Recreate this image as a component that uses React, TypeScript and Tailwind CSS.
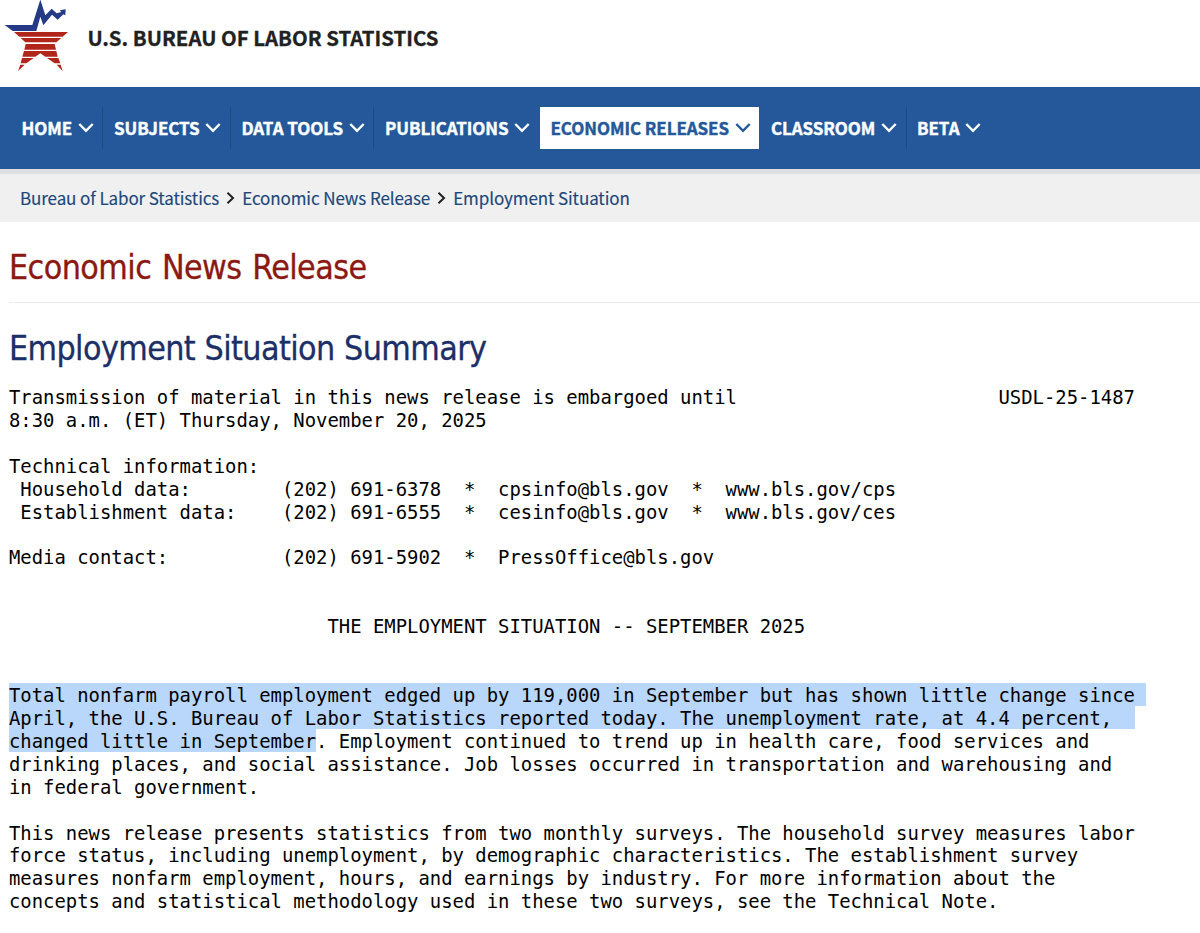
import React from "react";

type NavItem = { label: string; box: string; active?: boolean };

const navItems: NavItem[] = [
  { label: "HOME", box: "w-[91px] border-r pl-[9.5px]" },
  { label: "SUBJECTS", box: "w-[128px] border-r pl-[11px]" },
  { label: "DATA TOOLS", box: "w-[143px] border-r pl-[10.5px]" },
  { label: "PUBLICATIONS", box: "w-[166px] pl-[11px]" },
  { label: "ECONOMIC RELEASES", box: "w-[219px] pl-[10.5px]", active: true },
  { label: "CLASSROOM", box: "w-[148px] border-r pl-[12px]" },
  { label: "BETA", box: "w-[90px] pl-[10px]" },
];

const crumbs = ["Bureau of Labor Statistics", "Economic News Release", "Employment Situation"];

const intro = `Transmission of material in this news release is embargoed until                       USDL-25-1487
8:30 a.m. (ET) Thursday, November 20, 2025

Technical information:
 Household data:        (202) 691-6378  *  cpsinfo@bls.gov  *  www.bls.gov/cps
 Establishment data:    (202) 691-6555  *  cesinfo@bls.gov  *  www.bls.gov/ces

Media contact:          (202) 691-5902  *  PressOffice@bls.gov


                            THE EMPLOYMENT SITUATION -- SEPTEMBER 2025


`;

const selected = `Total nonfarm payroll employment edged up by 119,000 in September but has shown little change since 
April, the U.S. Bureau of Labor Statistics reported today. The unemployment rate, at 4.4 percent,  
changed little in September`;

const rest = `. Employment continued to trend up in health care, food services and
drinking places, and social assistance. Job losses occurred in transportation and warehousing and
in federal government.

This news release presents statistics from two monthly surveys. The household survey measures labor
force status, including unemployment, by demographic characteristics. The establishment survey
measures nonfarm employment, hours, and earnings by industry. For more information about the
concepts and statistical methodology used in these two surveys, see the Technical Note.`;

function StarLogo() {
  return (
    <svg viewBox="0 0 240 240" className="h-20 w-20 shrink-0" aria-hidden="true">
      <path
        d="M14 75 L97 75 L121 -1 L136 46 L155 26 L170 40 L184 36 L179 31 L197 28 L196 46 L190 43 L173 59 L156 44 L130 76 L121 50 L109 93 L38 93 Z"
        fill="#253a86"
      />
      <path
        d="M42 96 H204 L188 110 H58 Z M62 114 H184 L169 127 H76 Z M77 132 H164 L168 149 H73 Z M72 153 H169 L173 170 H136 L121 160 L106 170 H67 Z M66 174 H101 L79 190 H62 Z M141 174 H175 L181 190 H164 Z M61 194 H74 L54 213 Z M170 194 H182 L188 214 Z"
        fill="#b0261b"
      />
    </svg>
  );
}

function Chevron() {
  return (
    <svg viewBox="0 0 16 12" className="ml-[5.5px] h-3 w-4 shrink-0" fill="none" stroke="currentColor" strokeWidth="2.4" aria-hidden="true">
      <path d="M1.3 2 L8 8.8 L14.7 2" />
    </svg>
  );
}

export default function App() {
  return (
    <div className="h-[933px] w-full overflow-hidden bg-white font-['Noto_Sans_CJK_SC',sans-serif]">
      <header className="flex h-[87px] items-start">
        <StarLogo />
        <span className="ml-[7.5px] mt-[22px] whitespace-nowrap text-[20.4px] font-bold leading-[30px] text-[#212121] [-webkit-text-stroke:0.3px]">
          U.S. BUREAU OF LABOR STATISTICS
        </span>
      </header>

      <nav className="flex h-[82px] items-center bg-[#24589a] pl-3">
        {navItems.map((item) => (
          <a
            key={item.label}
            className={`flex h-[42px] shrink-0 items-center border-[#1f4a80] whitespace-nowrap text-[17px] font-bold tracking-[-0.08px] [-webkit-text-stroke:0.4px] ${item.box} ${
              item.active ? "bg-white text-[#24589a]" : "text-white"
            }`}
          >
            <span>{item.label}</span>
            <Chevron />
          </a>
        ))}
      </nav>

      <div className="flex h-[53px] items-center border-t-[5px] border-[#dedfe3] bg-[#f0f0f0] pl-5 text-[17px] tracking-[-0.1px] text-[#20477a] [-webkit-text-stroke:0.15px]">
        {crumbs.map((crumb, i) => (
          <React.Fragment key={crumb}>
            {i > 0 && (
              <svg viewBox="0 0 9 14" className="mx-[7px] h-3.5 w-[9px]" fill="none" stroke="#212121" strokeWidth="2" aria-hidden="true">
                <path d="M1.5 1.8 L7 7 L1.5 12.2" />
              </svg>
            )}
            <a className="whitespace-nowrap">{crumb}</a>
          </React.Fragment>
        ))}
      </div>

      <main className="pl-[9px]">
        <h1 className="flex h-[81px] items-center border-b border-[#ececec] pt-3 font-['DejaVu_Sans_Condensed','DejaVu_Sans',sans-serif] text-[33.7px] tracking-[-0.55px] text-[#8c1812] [word-spacing:1.5px] [-webkit-text-stroke:0.3px]">
          Economic News Release
        </h1>
        <h2 className="flex h-[83px] items-center pt-2.5 font-['DejaVu_Sans_Condensed','DejaVu_Sans',sans-serif] text-[33.7px] tracking-[-0.6px] text-[#1c2f66] [word-spacing:0.5px] [-webkit-text-stroke:0.3px]">
          Employment Situation Summary
        </h2>
        <pre className="font-['DejaVu_Sans_Mono',monospace] text-[18.9px] leading-[22.92px] text-black">
          {intro}
          <span className="bg-[#b9d6fb] py-[0.5px]">{selected}</span>
          {rest}
        </pre>
      </main>
    </div>
  );
}
